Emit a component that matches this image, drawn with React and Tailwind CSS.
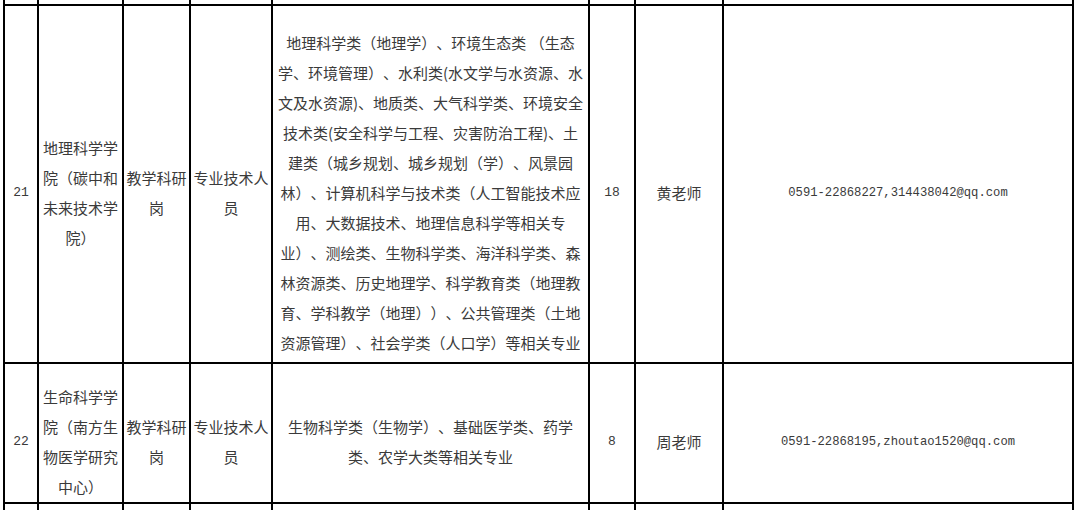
const cjk = { fontFamily: '"Noto Sans CJK SC", "Noto Sans", sans-serif' };
const mono = { fontFamily: '"Liberation Mono", "Noto Sans CJK SC", monospace' };

const rows = [
  {
    no: "21",
    dept: ["地理科学学", "院（碳中和", "未来技术学", "院）"],
    post: ["教学科研", "岗"],
    type: ["专业技术人", "员"],
    major: [
      "地理科学类（地理学）、环境生态类 （生态",
      "学、环境管理）、水利类(水文学与水资源、水",
      "文及水资源)、地质类、大气科学类、环境安全",
      "技术类(安全科学与工程、灾害防治工程)、土",
      "建类（城乡规划、城乡规划（学）、风景园",
      "林）、计算机科学与技术类（人工智能技术应",
      "用、大数据技术、地理信息科学等相关专",
      "业）、测绘类、生物科学类、海洋科学类、森",
      "林资源类、历史地理学、科学教育类（地理教",
      "育、学科教学（地理））、公共管理类（土地",
      "资源管理）、社会学类（人口学）等相关专业",
    ],
    count: "18",
    contact: "黄老师",
    info: "0591-22868227,314438042@qq.com",
  },
  {
    no: "22",
    dept: ["生命科学学", "院（南方生", "物医学研究", "中心）"],
    post: ["教学科研", "岗"],
    type: ["专业技术人", "员"],
    major: ["生物科学类（生物学）、基础医学类、药学", "类、农学大类等相关专业"],
    count: "8",
    contact: "周老师",
    info: "0591-22868195,zhoutao1520@qq.com",
  },
];

function Cell({ children, font = cjk, size = "text-[15px]" }) {
  return (
    <div
      className={`bg-white flex flex-col items-center justify-center pt-[18px] text-[#3a3a3a] leading-[30px] [text-spacing-trim:space-all] ${size}`}
      style={font}
    >
      {children}
    </div>
  );
}

function Lines({ items }) {
  return items.map((l, i) => (
    <div key={i} className="whitespace-nowrap text-center">
      {l}
    </div>
  ));
}

export default function App() {
  const blanks = Array.from({ length: 8 });
  return (
    <div className="w-[1080px] h-[510px] overflow-hidden bg-white">
      <div className="ml-[3px] mt-[-20px] w-[1071px] bg-black p-[2px] grid gap-[2px] grid-cols-[32px_83px_65px_80px_315px_44px_86px_348px] grid-rows-[22px_356px_138px_40px]">
        {blanks.map((_, i) => (
          <div key={"t" + i} className="bg-white" />
        ))}
        {rows.map((r) => (
          <>
            <Cell font={mono} size="text-[13px]">{r.no}</Cell>
            <Cell>
              <Lines items={r.dept} />
            </Cell>
            <Cell>
              <Lines items={r.post} />
            </Cell>
            <Cell>
              <Lines items={r.type} />
            </Cell>
            <Cell>
              <Lines items={r.major} />
            </Cell>
            <Cell font={mono} size="text-[13px]">{r.count}</Cell>
            <Cell>{r.contact}</Cell>
            <Cell font={mono} size="text-[12.2px]">{r.info}</Cell>
          </>
        ))}
        {blanks.map((_, i) => (
          <div key={"b" + i} className="bg-white" />
        ))}
      </div>
    </div>
  );
}
